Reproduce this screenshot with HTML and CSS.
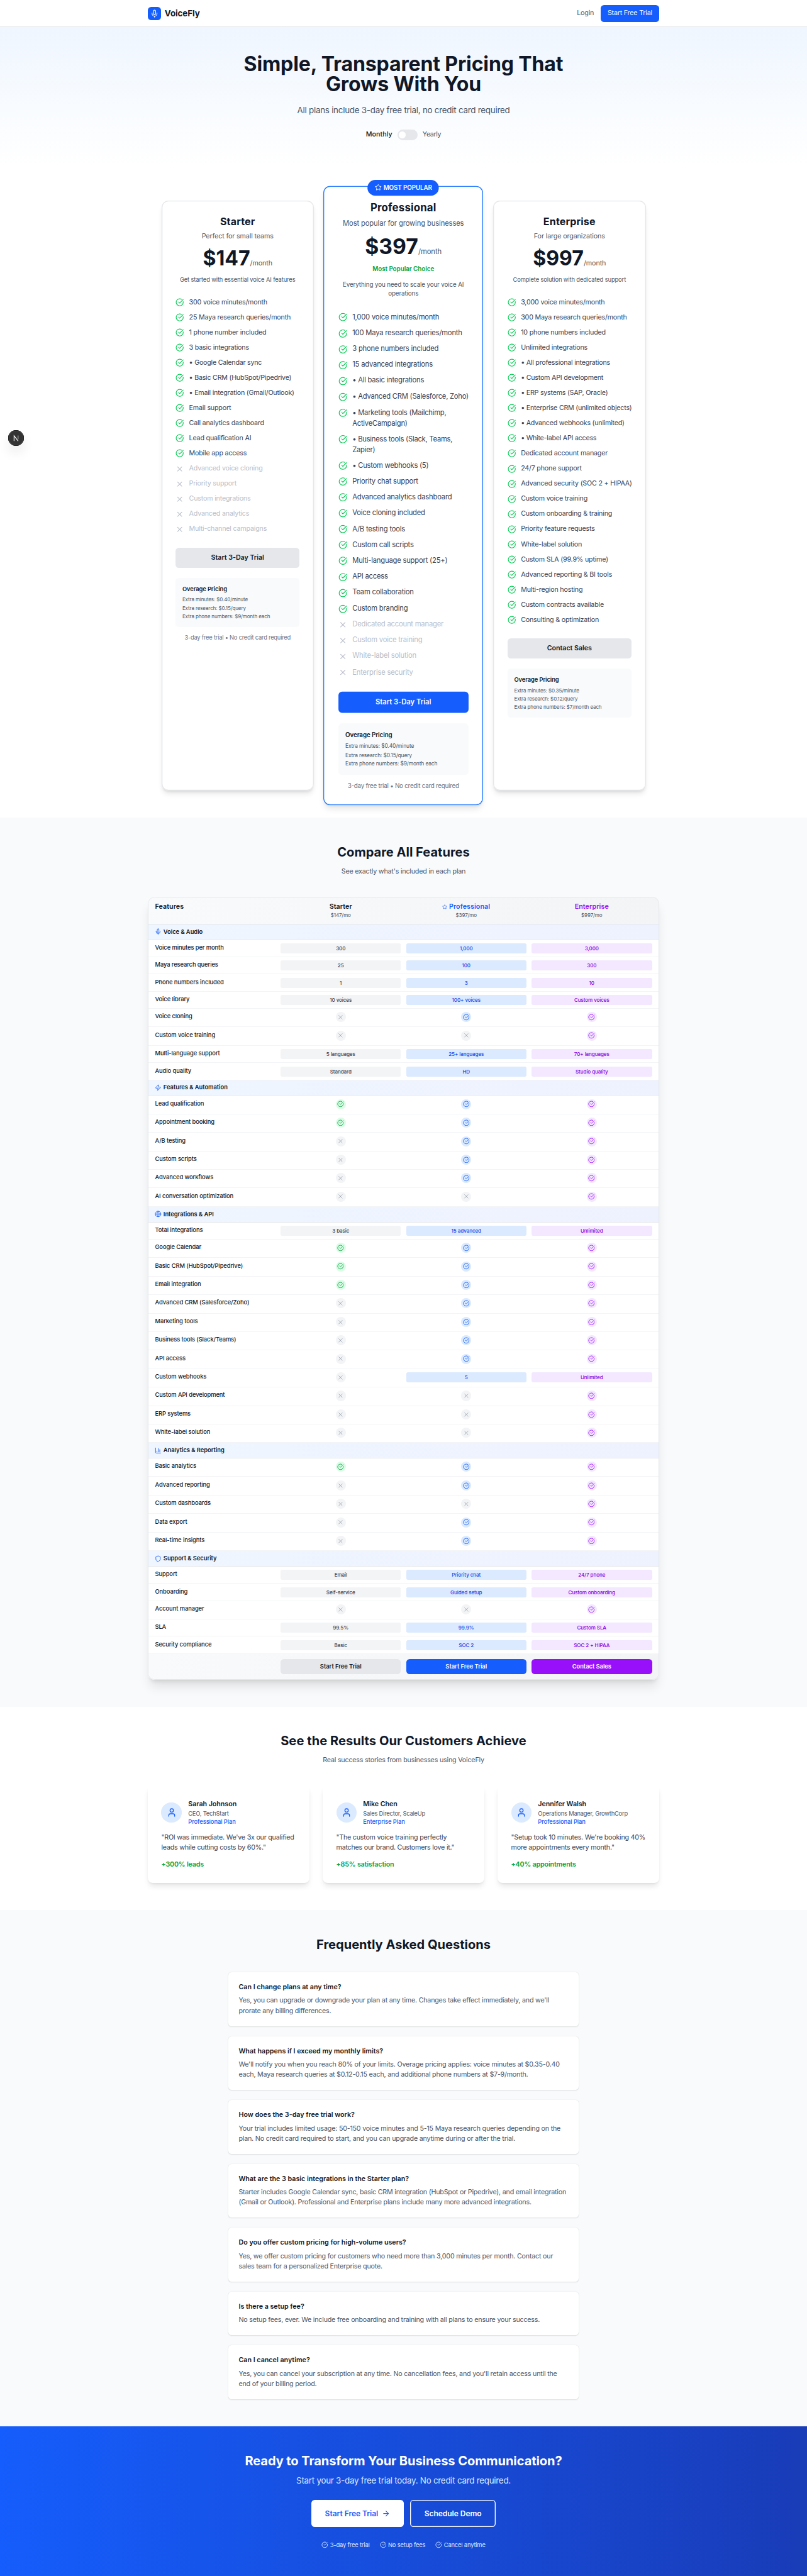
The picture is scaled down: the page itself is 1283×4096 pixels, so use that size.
FILE: index.html
```html
<!DOCTYPE html>
<html lang="en">
<head>
<meta charset="utf-8">
<title>VoiceFly Pricing</title>
<link rel="stylesheet" href="styles.css">
</head>
<body>
<svg class="sprite" aria-hidden="true">
  <symbol id="check" viewBox="0 0 24 24"><path d="M21.801 10A10 10 0 1 1 17 3.335"/><path d="m9 11 3 3L22 4"/></symbol>
  <symbol id="x" viewBox="0 0 24 24"><path d="M18 6 6 18"/><path d="m6 6 12 12"/></symbol>
  <symbol id="mic" viewBox="0 0 24 24"><path d="M12 19v3"/><path d="M19 10v2a7 7 0 0 1-14 0v-2"/><rect x="9" y="2" width="6" height="13" rx="3"/></symbol>
  <symbol id="star" viewBox="0 0 24 24"><path d="M11.525 2.295a.53.53 0 0 1 .95 0l2.31 4.679a2.123 2.123 0 0 0 1.595 1.16l5.166.756a.53.53 0 0 1 .294.904l-3.736 3.638a2.123 2.123 0 0 0-.611 1.878l.882 5.14a.53.53 0 0 1-.771.56l-4.618-2.428a2.122 2.122 0 0 0-1.973 0L6.396 21.01a.53.53 0 0 1-.77-.56l.881-5.139a2.122 2.122 0 0 0-.611-1.879L2.16 9.795a.53.53 0 0 1 .294-.906l5.165-.755a2.122 2.122 0 0 0 1.597-1.16z"/></symbol>
  <symbol id="zap" viewBox="0 0 24 24"><path d="M4 14a1 1 0 0 1-.78-1.63l9.9-10.2a.5.5 0 0 1 .86.46l-1.92 6.02A1 1 0 0 0 13 10h7a1 1 0 0 1 .78 1.63l-9.9 10.2a.5.5 0 0 1-.86-.46l1.92-6.02A1 1 0 0 0 11 14z"/></symbol>
  <symbol id="globe" viewBox="0 0 24 24"><circle cx="12" cy="12" r="10"/><path d="M12 2a14.5 14.5 0 0 0 0 20 14.5 14.5 0 0 0 0-20"/><path d="M2 12h20"/></symbol>
  <symbol id="chart" viewBox="0 0 24 24"><path d="M3 3v16a2 2 0 0 0 2 2h16"/><path d="M18 17V9"/><path d="M13 17V5"/><path d="M8 17v-3"/></symbol>
  <symbol id="shield" viewBox="0 0 24 24"><path d="M20 13c0 5-3.5 7.5-7.66 8.95a1 1 0 0 1-.67-.01C7.5 20.5 4 18 4 13V6a1 1 0 0 1 1-1c2 0 4.5-1.2 6.24-2.72a1.17 1.17 0 0 1 1.52 0C14.51 3.81 17 5 19 5a1 1 0 0 1 1 1z"/></symbol>
  <symbol id="user" viewBox="0 0 24 24"><path d="M19 21v-2a4 4 0 0 0-4-4H9a4 4 0 0 0-4 4v2"/><circle cx="12" cy="7" r="4"/></symbol>
  <symbol id="arrow" viewBox="0 0 24 24"><path d="M5 12h14"/><path d="m12 5 7 7-7 7"/></symbol>
</svg>

<header class="topbar">
  <div class="wrap topbar-in">
    <div class="brand"><span class="brand-mark"><svg><use href="#mic"/></svg></span><span class="brand-name">VoiceFly</span></div>
    <nav class="nav"><a class="login">Login</a><a class="nav-cta">Start Free Trial</a></nav>
  </div>
</header>

<section class="hero">
  <h1>Simple, Transparent Pricing That<br>Grows With You</h1>
  <p class="hero-sub">All plans include 3-day free trial, no credit card required</p>
  <div class="billing"><span class="monthly">Monthly</span><span class="toggle"><i></i></span><span class="yearly">Yearly</span></div>
</section>

<section class="plans">
  <article class="plan">
    <h3>Starter</h3>
    <p class="tagline">Perfect for small teams</p>
    <p class="price"><b>$147</b><span>/month</span></p>
    <p class="desc">Get started with essential voice AI features</p>
    <ul>
      <li><svg><use href="#check"/></svg>300 voice minutes/month</li>
      <li><svg><use href="#check"/></svg>25 Maya research queries/month</li>
      <li><svg><use href="#check"/></svg>1 phone number included</li>
      <li><svg><use href="#check"/></svg>3 basic integrations</li>
      <li class="sub-item"><svg><use href="#check"/></svg>• Google Calendar sync</li>
      <li class="sub-item"><svg><use href="#check"/></svg>• Basic CRM (HubSpot/Pipedrive)</li>
      <li class="sub-item"><svg><use href="#check"/></svg>• Email integration (Gmail/Outlook)</li>
      <li><svg><use href="#check"/></svg>Email support</li>
      <li><svg><use href="#check"/></svg>Call analytics dashboard</li>
      <li><svg><use href="#check"/></svg>Lead qualification AI</li>
      <li><svg><use href="#check"/></svg>Mobile app access</li>
      <li class="off"><svg><use href="#x"/></svg>Advanced voice cloning</li>
      <li class="off"><svg><use href="#x"/></svg>Priority support</li>
      <li class="off"><svg><use href="#x"/></svg>Custom integrations</li>
      <li class="off"><svg><use href="#x"/></svg>Advanced analytics</li>
      <li class="off"><svg><use href="#x"/></svg>Multi-channel campaigns</li>
    </ul>
    <a class="plan-btn">Start 3-Day Trial</a>
    <div class="overage"><h4>Overage Pricing</h4><p>Extra minutes: $0.40/minute</p><p>Extra research: $0.15/query</p><p>Extra phone numbers: $9/month each</p></div>
    <p class="note">3-day free trial • No credit card required</p>
  </article>

  <article class="plan featured">
    <div class="badge"><svg><use href="#star"/></svg>MOST POPULAR</div>
    <h3>Professional</h3>
    <p class="tagline">Most popular for growing businesses</p>
    <p class="price"><b>$397</b><span>/month</span></p>
    <p class="choice">Most Popular Choice</p>
    <p class="desc">Everything you need to scale your voice AI<br>operations</p>
    <ul>
      <li><svg><use href="#check"/></svg>1,000 voice minutes/month</li>
      <li><svg><use href="#check"/></svg>100 Maya research queries/month</li>
      <li><svg><use href="#check"/></svg>3 phone numbers included</li>
      <li><svg><use href="#check"/></svg>15 advanced integrations</li>
      <li class="sub-item"><svg><use href="#check"/></svg>• All basic integrations</li>
      <li class="sub-item"><svg><use href="#check"/></svg>• Advanced CRM (Salesforce, Zoho)</li>
      <li class="sub-item"><svg><use href="#check"/></svg><span>• Marketing tools (Mailchimp,<br>ActiveCampaign)</span></li>
      <li class="sub-item"><svg><use href="#check"/></svg><span>• Business tools (Slack, Teams,<br>Zapier)</span></li>
      <li class="sub-item"><svg><use href="#check"/></svg>• Custom webhooks (5)</li>
      <li><svg><use href="#check"/></svg>Priority chat support</li>
      <li><svg><use href="#check"/></svg>Advanced analytics dashboard</li>
      <li><svg><use href="#check"/></svg>Voice cloning included</li>
      <li><svg><use href="#check"/></svg>A/B testing tools</li>
      <li><svg><use href="#check"/></svg>Custom call scripts</li>
      <li><svg><use href="#check"/></svg>Multi-language support (25+)</li>
      <li><svg><use href="#check"/></svg>API access</li>
      <li><svg><use href="#check"/></svg>Team collaboration</li>
      <li><svg><use href="#check"/></svg>Custom branding</li>
      <li class="off"><svg><use href="#x"/></svg>Dedicated account manager</li>
      <li class="off"><svg><use href="#x"/></svg>Custom voice training</li>
      <li class="off"><svg><use href="#x"/></svg>White-label solution</li>
      <li class="off"><svg><use href="#x"/></svg>Enterprise security</li>
    </ul>
    <a class="plan-btn primary">Start 3-Day Trial</a>
    <div class="overage"><h4>Overage Pricing</h4><p>Extra minutes: $0.40/minute</p><p>Extra research: $0.15/query</p><p>Extra phone numbers: $9/month each</p></div>
    <p class="note">3-day free trial • No credit card required</p>
  </article>

  <article class="plan">
    <h3>Enterprise</h3>
    <p class="tagline">For large organizations</p>
    <p class="price"><b>$997</b><span>/month</span></p>
    <p class="desc">Complete solution with dedicated support</p>
    <ul>
      <li><svg><use href="#check"/></svg>3,000 voice minutes/month</li>
      <li><svg><use href="#check"/></svg>300 Maya research queries/month</li>
      <li><svg><use href="#check"/></svg>10 phone numbers included</li>
      <li><svg><use href="#check"/></svg>Unlimited integrations</li>
      <li class="sub-item"><svg><use href="#check"/></svg>• All professional integrations</li>
      <li class="sub-item"><svg><use href="#check"/></svg>• Custom API development</li>
      <li class="sub-item"><svg><use href="#check"/></svg>• ERP systems (SAP, Oracle)</li>
      <li class="sub-item"><svg><use href="#check"/></svg>• Enterprise CRM (unlimited objects)</li>
      <li class="sub-item"><svg><use href="#check"/></svg>• Advanced webhooks (unlimited)</li>
      <li class="sub-item"><svg><use href="#check"/></svg>• White-label API access</li>
      <li><svg><use href="#check"/></svg>Dedicated account manager</li>
      <li><svg><use href="#check"/></svg>24/7 phone support</li>
      <li><svg><use href="#check"/></svg>Advanced security (SOC 2 + HIPAA)</li>
      <li><svg><use href="#check"/></svg>Custom voice training</li>
      <li><svg><use href="#check"/></svg>Custom onboarding &amp; training</li>
      <li><svg><use href="#check"/></svg>Priority feature requests</li>
      <li><svg><use href="#check"/></svg>White-label solution</li>
      <li><svg><use href="#check"/></svg>Custom SLA (99.9% uptime)</li>
      <li><svg><use href="#check"/></svg>Advanced reporting &amp; BI tools</li>
      <li><svg><use href="#check"/></svg>Multi-region hosting</li>
      <li><svg><use href="#check"/></svg>Custom contracts available</li>
      <li><svg><use href="#check"/></svg>Consulting &amp; optimization</li>
    </ul>
    <a class="plan-btn">Contact Sales</a>
    <div class="overage"><h4>Overage Pricing</h4><p>Extra minutes: $0.35/minute</p><p>Extra research: $0.12/query</p><p>Extra phone numbers: $7/month each</p></div>
  </article>
</section>

<section class="band compare">
  <h2>Compare All Features</h2>
  <p class="sub">See exactly what's included in each plan</p>
  <div class="matrix">
    <div class="row head"><div>Features</div><div>Starter<small>$147/mo</small></div><div class="pro"><span><svg><use href="#star"/></svg>Professional</span><small>$397/mo</small></div><div class="ent">Enterprise<small>$997/mo</small></div></div>

    <div class="cat"><svg><use href="#mic"/></svg>Voice &amp; Audio</div>
    <div class="row"><div>Voice minutes per month</div><b>300</b><b>1,000</b><b>3,000</b></div>
    <div class="row"><div>Maya research queries</div><b>25</b><b>100</b><b>300</b></div>
    <div class="row"><div>Phone numbers included</div><b>1</b><b>3</b><b>10</b></div>
    <div class="row"><div>Voice library</div><b>10 voices</b><b>100+ voices</b><b>Custom voices</b></div>
    <div class="row tall"><div>Voice cloning</div><i class="no"><svg><use href="#x"/></svg></i><i><svg><use href="#check"/></svg></i><i><svg><use href="#check"/></svg></i></div>
    <div class="row tall"><div>Custom voice training</div><i class="no"><svg><use href="#x"/></svg></i><i class="no"><svg><use href="#x"/></svg></i><i><svg><use href="#check"/></svg></i></div>
    <div class="row"><div>Multi-language support</div><b>5 languages</b><b>25+ languages</b><b>70+ languages</b></div>
    <div class="row"><div>Audio quality</div><b>Standard</b><b>HD</b><b>Studio quality</b></div>

    <div class="cat"><svg><use href="#zap"/></svg>Features &amp; Automation</div>
    <div class="row tall"><div>Lead qualification</div><i><svg><use href="#check"/></svg></i><i><svg><use href="#check"/></svg></i><i><svg><use href="#check"/></svg></i></div>
    <div class="row tall"><div>Appointment booking</div><i><svg><use href="#check"/></svg></i><i><svg><use href="#check"/></svg></i><i><svg><use href="#check"/></svg></i></div>
    <div class="row tall"><div>A/B testing</div><i class="no"><svg><use href="#x"/></svg></i><i><svg><use href="#check"/></svg></i><i><svg><use href="#check"/></svg></i></div>
    <div class="row tall"><div>Custom scripts</div><i class="no"><svg><use href="#x"/></svg></i><i><svg><use href="#check"/></svg></i><i><svg><use href="#check"/></svg></i></div>
    <div class="row tall"><div>Advanced workflows</div><i class="no"><svg><use href="#x"/></svg></i><i><svg><use href="#check"/></svg></i><i><svg><use href="#check"/></svg></i></div>
    <div class="row tall"><div>AI conversation optimization</div><i class="no"><svg><use href="#x"/></svg></i><i class="no"><svg><use href="#x"/></svg></i><i><svg><use href="#check"/></svg></i></div>

    <div class="cat"><svg><use href="#globe"/></svg>Integrations &amp; API</div>
    <div class="row"><div>Total integrations</div><b>3 basic</b><b>15 advanced</b><b>Unlimited</b></div>
    <div class="row tall"><div>Google Calendar</div><i><svg><use href="#check"/></svg></i><i><svg><use href="#check"/></svg></i><i><svg><use href="#check"/></svg></i></div>
    <div class="row tall"><div>Basic CRM (HubSpot/Pipedrive)</div><i><svg><use href="#check"/></svg></i><i><svg><use href="#check"/></svg></i><i><svg><use href="#check"/></svg></i></div>
    <div class="row tall"><div>Email integration</div><i><svg><use href="#check"/></svg></i><i><svg><use href="#check"/></svg></i><i><svg><use href="#check"/></svg></i></div>
    <div class="row tall"><div>Advanced CRM (Salesforce/Zoho)</div><i class="no"><svg><use href="#x"/></svg></i><i><svg><use href="#check"/></svg></i><i><svg><use href="#check"/></svg></i></div>
    <div class="row tall"><div>Marketing tools</div><i class="no"><svg><use href="#x"/></svg></i><i><svg><use href="#check"/></svg></i><i><svg><use href="#check"/></svg></i></div>
    <div class="row tall"><div>Business tools (Slack/Teams)</div><i class="no"><svg><use href="#x"/></svg></i><i><svg><use href="#check"/></svg></i><i><svg><use href="#check"/></svg></i></div>
    <div class="row tall"><div>API access</div><i class="no"><svg><use href="#x"/></svg></i><i><svg><use href="#check"/></svg></i><i><svg><use href="#check"/></svg></i></div>
    <div class="row tall"><div>Custom webhooks</div><i class="no"><svg><use href="#x"/></svg></i><b>5</b><b>Unlimited</b></div>
    <div class="row tall"><div>Custom API development</div><i class="no"><svg><use href="#x"/></svg></i><i class="no"><svg><use href="#x"/></svg></i><i><svg><use href="#check"/></svg></i></div>
    <div class="row tall"><div>ERP systems</div><i class="no"><svg><use href="#x"/></svg></i><i class="no"><svg><use href="#x"/></svg></i><i><svg><use href="#check"/></svg></i></div>
    <div class="row tall"><div>White-label solution</div><i class="no"><svg><use href="#x"/></svg></i><i class="no"><svg><use href="#x"/></svg></i><i><svg><use href="#check"/></svg></i></div>

    <div class="cat"><svg><use href="#chart"/></svg>Analytics &amp; Reporting</div>
    <div class="row tall"><div>Basic analytics</div><i><svg><use href="#check"/></svg></i><i><svg><use href="#check"/></svg></i><i><svg><use href="#check"/></svg></i></div>
    <div class="row tall"><div>Advanced reporting</div><i class="no"><svg><use href="#x"/></svg></i><i><svg><use href="#check"/></svg></i><i><svg><use href="#check"/></svg></i></div>
    <div class="row tall"><div>Custom dashboards</div><i class="no"><svg><use href="#x"/></svg></i><i class="no"><svg><use href="#x"/></svg></i><i><svg><use href="#check"/></svg></i></div>
    <div class="row tall"><div>Data export</div><i class="no"><svg><use href="#x"/></svg></i><i><svg><use href="#check"/></svg></i><i><svg><use href="#check"/></svg></i></div>
    <div class="row tall"><div>Real-time insights</div><i class="no"><svg><use href="#x"/></svg></i><i><svg><use href="#check"/></svg></i><i><svg><use href="#check"/></svg></i></div>

    <div class="cat"><svg><use href="#shield"/></svg>Support &amp; Security</div>
    <div class="row"><div>Support</div><b>Email</b><b>Priority chat</b><b>24/7 phone</b></div>
    <div class="row"><div>Onboarding</div><b>Self-service</b><b>Guided setup</b><b>Custom onboarding</b></div>
    <div class="row tall"><div>Account manager</div><i class="no"><svg><use href="#x"/></svg></i><i class="no"><svg><use href="#x"/></svg></i><i><svg><use href="#check"/></svg></i></div>
    <div class="row"><div>SLA</div><b>99.5%</b><b>99.9%</b><b>Custom SLA</b></div>
    <div class="row"><div>Security compliance</div><b>Basic</b><b>SOC 2</b><b>SOC 2 + HIPAA</b></div>

    <div class="row foot"><div></div><a>Start Free Trial</a><a>Start Free Trial</a><a>Contact Sales</a></div>
  </div>
</section>

<section class="band stories">
  <h2>See the Results Our Customers Achieve</h2>
  <p class="sub">Real success stories from businesses using VoiceFly</p>
  <div class="story-grid">
    <article class="story">
      <div class="who"><span class="avatar"><svg><use href="#user"/></svg></span><div><h4>Sarah Johnson</h4><p class="role">CEO, TechStart</p><p class="tier">Professional Plan</p></div></div>
      <p class="quote">"ROI was immediate. We've 3x our qualified<br>leads while cutting costs by 60%."</p>
      <p class="result">+300% leads</p>
    </article>
    <article class="story">
      <div class="who"><span class="avatar"><svg><use href="#user"/></svg></span><div><h4>Mike Chen</h4><p class="role">Sales Director, ScaleUp</p><p class="tier">Enterprise Plan</p></div></div>
      <p class="quote">"The custom voice training perfectly<br>matches our brand. Customers love it."</p>
      <p class="result">+85% satisfaction</p>
    </article>
    <article class="story">
      <div class="who"><span class="avatar"><svg><use href="#user"/></svg></span><div><h4>Jennifer Walsh</h4><p class="role">Operations Manager, GrowthCorp</p><p class="tier">Professional Plan</p></div></div>
      <p class="quote">"Setup took 10 minutes. We're booking 40%<br>more appointments every month."</p>
      <p class="result">+40% appointments</p>
    </article>
  </div>
</section>

<section class="band faq">
  <h2>Frequently Asked Questions</h2>
  <div class="faq-list">
    <article><h4>Can I change plans at any time?</h4><p>Yes, you can upgrade or downgrade your plan at any time. Changes take effect immediately, and we'll<br>prorate any billing differences.</p></article>
    <article><h4>What happens if I exceed my monthly limits?</h4><p>We'll notify you when you reach 80% of your limits. Overage pricing applies: voice minutes at $0.35-0.40<br>each, Maya research queries at $0.12-0.15 each, and additional phone numbers at $7-9/month.</p></article>
    <article><h4>How does the 3-day free trial work?</h4><p>Your trial includes limited usage: 50-150 voice minutes and 5-15 Maya research queries depending on the<br>plan. No credit card required to start, and you can upgrade anytime during or after the trial.</p></article>
    <article><h4>What are the 3 basic integrations in the Starter plan?</h4><p>Starter includes Google Calendar sync, basic CRM integration (HubSpot or Pipedrive), and email integration<br>(Gmail or Outlook). Professional and Enterprise plans include many more advanced integrations.</p></article>
    <article><h4>Do you offer custom pricing for high-volume users?</h4><p>Yes, we offer custom pricing for customers who need more than 3,000 minutes per month. Contact our<br>sales team for a personalized Enterprise quote.</p></article>
    <article><h4>Is there a setup fee?</h4><p>No setup fees, ever. We include free onboarding and training with all plans to ensure your success.</p></article>
    <article><h4>Can I cancel anytime?</h4><p>Yes, you can cancel your subscription at any time. No cancellation fees, and you'll retain access until the<br>end of your billing period.</p></article>
  </div>
</section>

<section class="cta">
  <h2>Ready to Transform Your Business Communication?</h2>
  <p class="cta-sub">Start your 3-day free trial today. No credit card required.</p>
  <div class="cta-btns"><a class="solid">Start Free Trial<svg><use href="#arrow"/></svg></a><a class="ghost">Schedule Demo</a></div>
  <div class="perks"><span><svg><use href="#check"/></svg>3-day free trial</span><span><svg><use href="#check"/></svg>No setup fees</span><span><svg><use href="#check"/></svg>Cancel anytime</span></div>
</section>

<div class="dev-badge"><svg viewBox="0 0 38 38"><path d="M14 26V13.4L23.8 26"/><path class="bar" d="M23.6 12.9v8.4"/></svg></div>
</body>
</html>
```
FILE: styles.css
```css
/* 1rem is 16 units of a 1920-unit wide canvas */
html { font-size: 10.6945px; overflow-x: hidden; }
*, *::before, *::after { box-sizing: border-box; margin: 0; padding: 0; letter-spacing: var(--track); }
body {
  --track: -.018em;
  position: relative;
  font-family: Inter, "Liberation Sans", sans-serif;
  font-size: 1rem;
  line-height: 1.5rem;
  color: #101828;
  background: #fff;
  white-space: nowrap;
  overflow-x: hidden;
}
/* tracking eases off as the weight grows */
.monthly, .row, .tier { --track: -.009em; }
.choice, .plan-btn, .overage h4, .cat, .foot a, .who h4, .faq-list h4, .cta-btns { --track: -.003em; }
h1, h2, .price b, .badge, .result, .brand-name { --track: 0em; }
svg { fill: none; stroke: currentColor; stroke-width: 2; stroke-linecap: round; stroke-linejoin: round; width: 1rem; height: 1rem; flex: none; display: block; }
.sprite { position: absolute; width: 0; height: 0; }
ul { list-style: none; }
i { font-style: normal; }
.wrap { width: 76rem; margin: 0 auto; }

/* header */
.topbar { height: 4.0625rem; border-bottom: 1px solid #e5e7eb; background: #fff; }
.topbar-in { display: flex; justify-content: space-between; align-items: center; height: 4rem; }
.brand { display: flex; align-items: center; gap: .5rem; }
.brand-mark { width: 2rem; height: 2rem; border-radius: .5rem; background: #155dfc; color: #fff; display: grid; place-items: center; }
.brand-mark svg { width: 1.25rem; height: 1.25rem; }
.brand-name { font-size: 1.25rem; font-weight: 700; --track: -.006em; }
.nav { display: flex; align-items: center; gap: 1rem; }
.login { color: #4a5565; }
.nav-cta { height: 2.5rem; width: 8.7rem; text-align: center; line-height: 2.5rem; border-radius: .5rem; background: #155dfc; color: #fff; }

/* hero */
.hero { height: 20.75rem; padding-top: 4rem; text-align: center; background: linear-gradient(to bottom, #eff6ff, #fff); }
h1 { font-size: 3rem; line-height: 3rem; font-weight: 700; --track: -.005em; }
.hero-sub { margin-top: 1.5rem; font-size: 1.25rem; line-height: 1.75rem; color: #4a5565; }
.billing { display: flex; justify-content: center; align-items: center; gap: .75rem; margin-top: 2rem; height: 1.5rem; }
.monthly { font-weight: 500; --track: .004em; }
.yearly { color: #4a5565; --track: -.035em; }
.toggle { width: 3rem; height: 1.5rem; padding: .25rem; border-radius: 1rem; background: #e5e7eb; }
.toggle i { display: block; width: 1rem; height: 1rem; border-radius: 50%; background: #fff; }

/* plan cards */
.plans { width: 72rem; margin: 5rem auto 4rem; display: grid; grid-template-columns: repeat(3, minmax(0, 1fr)); gap: 2rem; height: 87.75rem; }
.plan {
  position: relative;
  padding: 2.125rem;
  border-radius: 1rem;
  background: #fff;
  text-align: center;
  box-shadow: inset 0 0 0 .125rem #e5e7eb, 0 .625rem .9375rem -.1875rem rgba(0,0,0,.1), 0 .25rem .375rem -.25rem rgba(0,0,0,.1);
}
.featured { transform: scale(1.05); box-shadow: inset 0 0 0 .125rem #2b7fff, 0 .625rem .9375rem -.1875rem rgba(0,0,0,.1), 0 .25rem .375rem -.25rem rgba(0,0,0,.1); }
.badge {
  position: absolute; top: -.875rem; left: 50%; transform: translateX(-50%);
  display: flex; align-items: center; gap: .25rem;
  height: 2.25rem; padding: 0 1rem; border-radius: 2rem;
  background: #155dfc; color: #fff; font-size: .875rem; font-weight: 600; --track: -.011em;
}
.plan h3 { font-size: 1.5rem; line-height: 2rem; font-weight: 700; --track: .01em; }
.tagline { margin-top: .5rem; color: #4a5565; --track: -.011em; }
.price { margin-top: 1rem; height: 3rem; line-height: 3rem; }
.price b { font-size: 3rem; font-weight: 700; }
.price span { color: #4a5565; --track: -.005em; }
.choice { margin-top: 1rem; font-size: .875rem; line-height: 1.25rem; font-weight: 600; color: #00a63e; }
.desc { margin-top: 1rem; font-size: .875rem; line-height: 1.25rem; color: #4a5565; --track: -.013em; }
.plan ul { margin-top: 2rem; display: flex; flex-direction: column; gap: .75rem; text-align: left; }
.plan li { display: flex; gap: .75rem; color: #364153; }
.plan li svg { width: 1.25rem; height: 1.25rem; margin-top: .125rem; color: #00c950; }
.plan li.off, .plan li.off svg { color: #b8bec9; }
.sub-item { --track: -.022em; }
.plan-btn { display: block; margin-top: 2rem; height: 3rem; line-height: 3rem; border-radius: .5rem; background: #e5e7eb; font-weight: 600; }
.plan-btn.primary { background: #155dfc; color: #fff; }
.overage { margin-top: 1.5rem; height: 7.25rem; padding: 1rem; border-radius: .5rem; background: #f9fafb; text-align: left; }
.overage h4 { font-size: .875rem; line-height: 1.25rem; font-weight: 600; margin-bottom: .5rem; --track: -.01em; }
.overage p { font-size: .75rem; line-height: 1rem; margin-bottom: .25rem; color: #4a5565; --track: -.015em; }
.note { margin-top: 1rem; font-size: .875rem; line-height: 1.25rem; color: #6a7282; --track: -.025em; }

/* shared section shell */
.band { padding: 4rem 0; text-align: center; }
h2 { font-size: 1.875rem; line-height: 2.25rem; font-weight: 700; }
.stories h2 { --track: .003em; }
.sub { margin-top: 1rem; color: #4a5565; }
.compare, .faq { background: #f9fafb; }

/* comparison matrix */
.matrix {
  width: 76rem; height: 116.4375rem; margin: 3rem auto 0; padding-top: .0625rem;
  border-radius: 1rem; overflow: hidden; background: #fff; position: relative;
  box-shadow: 0 1.25rem 1.5625rem -.3125rem rgba(0,0,0,.1), 0 .5rem .625rem -.375rem rgba(0,0,0,.1);
}
.matrix::after { content: ""; position: absolute; inset: 0; border: 1px solid #e5e7eb; border-radius: 1rem; pointer-events: none; }
.row {
  display: grid; grid-template-columns: repeat(4, minmax(0, 1fr)); column-gap: .75rem; align-items: start;
  height: 2.5625rem; padding: .5rem 1.0625rem 0; border-bottom: 1px solid #f3f4f6;
  font-size: .875rem; line-height: 1.25rem; font-weight: 500;
}
.row.tall { height: 2.75rem; }
.row > div:first-child { text-align: left; }
.row b { height: 1.5rem; line-height: 1.5rem; border-radius: .25rem; font-size: .75rem; font-weight: 500; background: #f3f4f6; color: #364153; }
.row b:nth-child(3) { background: #dbeafe; color: #1447e6; }
.row b:nth-child(4) { background: #f3e8ff; color: #8200db; }
.row i { justify-self: center; width: 1.5rem; height: 1.5rem; border-radius: 50%; display: grid; place-items: center; background: #dcfce7; color: #00a63e; }
.row i:nth-child(3) { background: #dbeafe; color: #155dfc; }
.row i:nth-child(4) { background: #f3e8ff; color: #9810fa; }
.row i.no { background: #f3f4f6; color: #99a1af; }
.row.head { height: 4.0625rem; padding-top: .75rem; border-color: #e5e7eb; background: linear-gradient(to right, #f9fafb, #f3f4f6); font-size: 1rem; line-height: 1.5rem; font-weight: 600; --track: .008em; }
.head small { display: block; font-size: .75rem; line-height: 1rem; font-weight: 400; color: #4a5565; --track: -.015em; }
.head .pro { color: #155dfc; }
.head .pro span { display: flex; justify-content: center; align-items: center; gap: .25rem; }
.head .pro svg { width: .75rem; height: .75rem; }
.head .ent { color: #9810fa; }
.cat { display: flex; align-items: center; gap: .25rem; height: 2.3125rem; padding: 0 1.0625rem; border-bottom: 1px solid #e5e7eb; background: linear-gradient(to right, #eff6ff, #eef2ff); font-size: .875rem; font-weight: 600; }
.cat svg { color: #155dfc; }
.row.foot { height: 3.8125rem; padding-top: .75rem; border: 0; background: linear-gradient(to right, #f9fafb, #f3f4f6); }
.foot a { height: 2.25rem; line-height: 2.25rem; border-radius: .5rem; font-weight: 600; background: #e5e7eb; }
.foot a:nth-child(3) { background: #155dfc; color: #fff; }
.foot a:nth-child(4) { background: #9810fa; color: #fff; }

/* customer stories */
.story-grid { width: 76rem; margin: 3rem auto 0; display: grid; grid-template-columns: repeat(3, minmax(0, 1fr)); gap: 2rem; text-align: left; }
.story { height: 14.5rem; padding: 2rem; border-radius: .75rem; background: #fff; box-shadow: 0 .625rem .9375rem -.1875rem rgba(0,0,0,.1), 0 .25rem .375rem -.25rem rgba(0,0,0,.1); }
.who { display: flex; align-items: center; gap: 1rem; }
.who h4 { font-size: 1rem; font-weight: 600; }
.role, .tier { font-size: .875rem; line-height: 1.25rem; color: #4a5565; }
.role { --track: -.022em; }
.tier { color: #155dfc; font-weight: 500; }
.avatar { width: 3rem; height: 3rem; border-radius: 50%; background: #dbeafe; color: #155dfc; display: grid; place-items: center; }
.avatar svg { width: 1.5rem; height: 1.5rem; }
.quote { margin-top: 1rem; color: #364153; --track: -.021em; }
.result { margin-top: 1rem; font-weight: 600; color: #00a63e; --track: -.015em; }

/* questions */
.faq-list { width: 52rem; margin: 3rem auto 0; display: flex; flex-direction: column; gap: 1.5rem; text-align: left; }
.faq-list article { padding: 1.5rem; border-radius: .5rem; background: #fff; box-shadow: 0 .0625rem .1875rem rgba(0,0,0,.1), 0 .0625rem .125rem -.0625rem rgba(0,0,0,.1); }
.faq-list h4 { font-size: 1rem; font-weight: 600; margin-bottom: .5rem; --track: 0em; }
.faq-list p { color: #4a5565; --track: -.019em; }

/* closing call to action */
.cta { height: 22.25rem; padding-top: 4rem; text-align: center; color: #fff; background: linear-gradient(to right, #155dfc, #193cb8); }
.cta h2 { --track: -.004em; }
.cta-sub { margin-top: 1rem; font-size: 1.25rem; line-height: 1.75rem; color: #dbeafe; --track: -.019em; }
.cta-btns { display: flex; justify-content: center; gap: 1rem; margin-top: 2rem; font-size: 1.125rem; font-weight: 600; }
.cta-btns a { display: flex; align-items: center; justify-content: center; gap: .5rem; height: 4rem; border-radius: .5rem; }
.solid { width: 13.7rem; background: #fff; color: #155dfc; }
.solid svg { width: 1.25rem; height: 1.25rem; }
.ghost { width: 12.7rem; box-shadow: inset 0 0 0 .125rem #fff; }
.perks { display: flex; justify-content: center; gap: 1.5rem; margin-top: 2rem; font-size: .875rem; line-height: 1.25rem; color: #dbeafe; }
.perks span { display: flex; align-items: center; gap: .25rem; }

/* floating framework badge */
.dev-badge { position: absolute; left: 1.1875rem; top: 63.9375rem; width: 2.375rem; height: 2.375rem; border-radius: 50%; background: #333; box-shadow: inset 0 0 0 .0625rem #171717, inset 0 0 0 .125rem #565656, 0 1rem 2rem -.5rem rgba(0,0,0,.24); }
.dev-badge svg { width: 100%; height: 100%; stroke: #fff; stroke-width: 1.7; stroke-linecap: butt; stroke-linejoin: miter; }
.dev-badge .bar { stroke: #b0b0b0; }
```
